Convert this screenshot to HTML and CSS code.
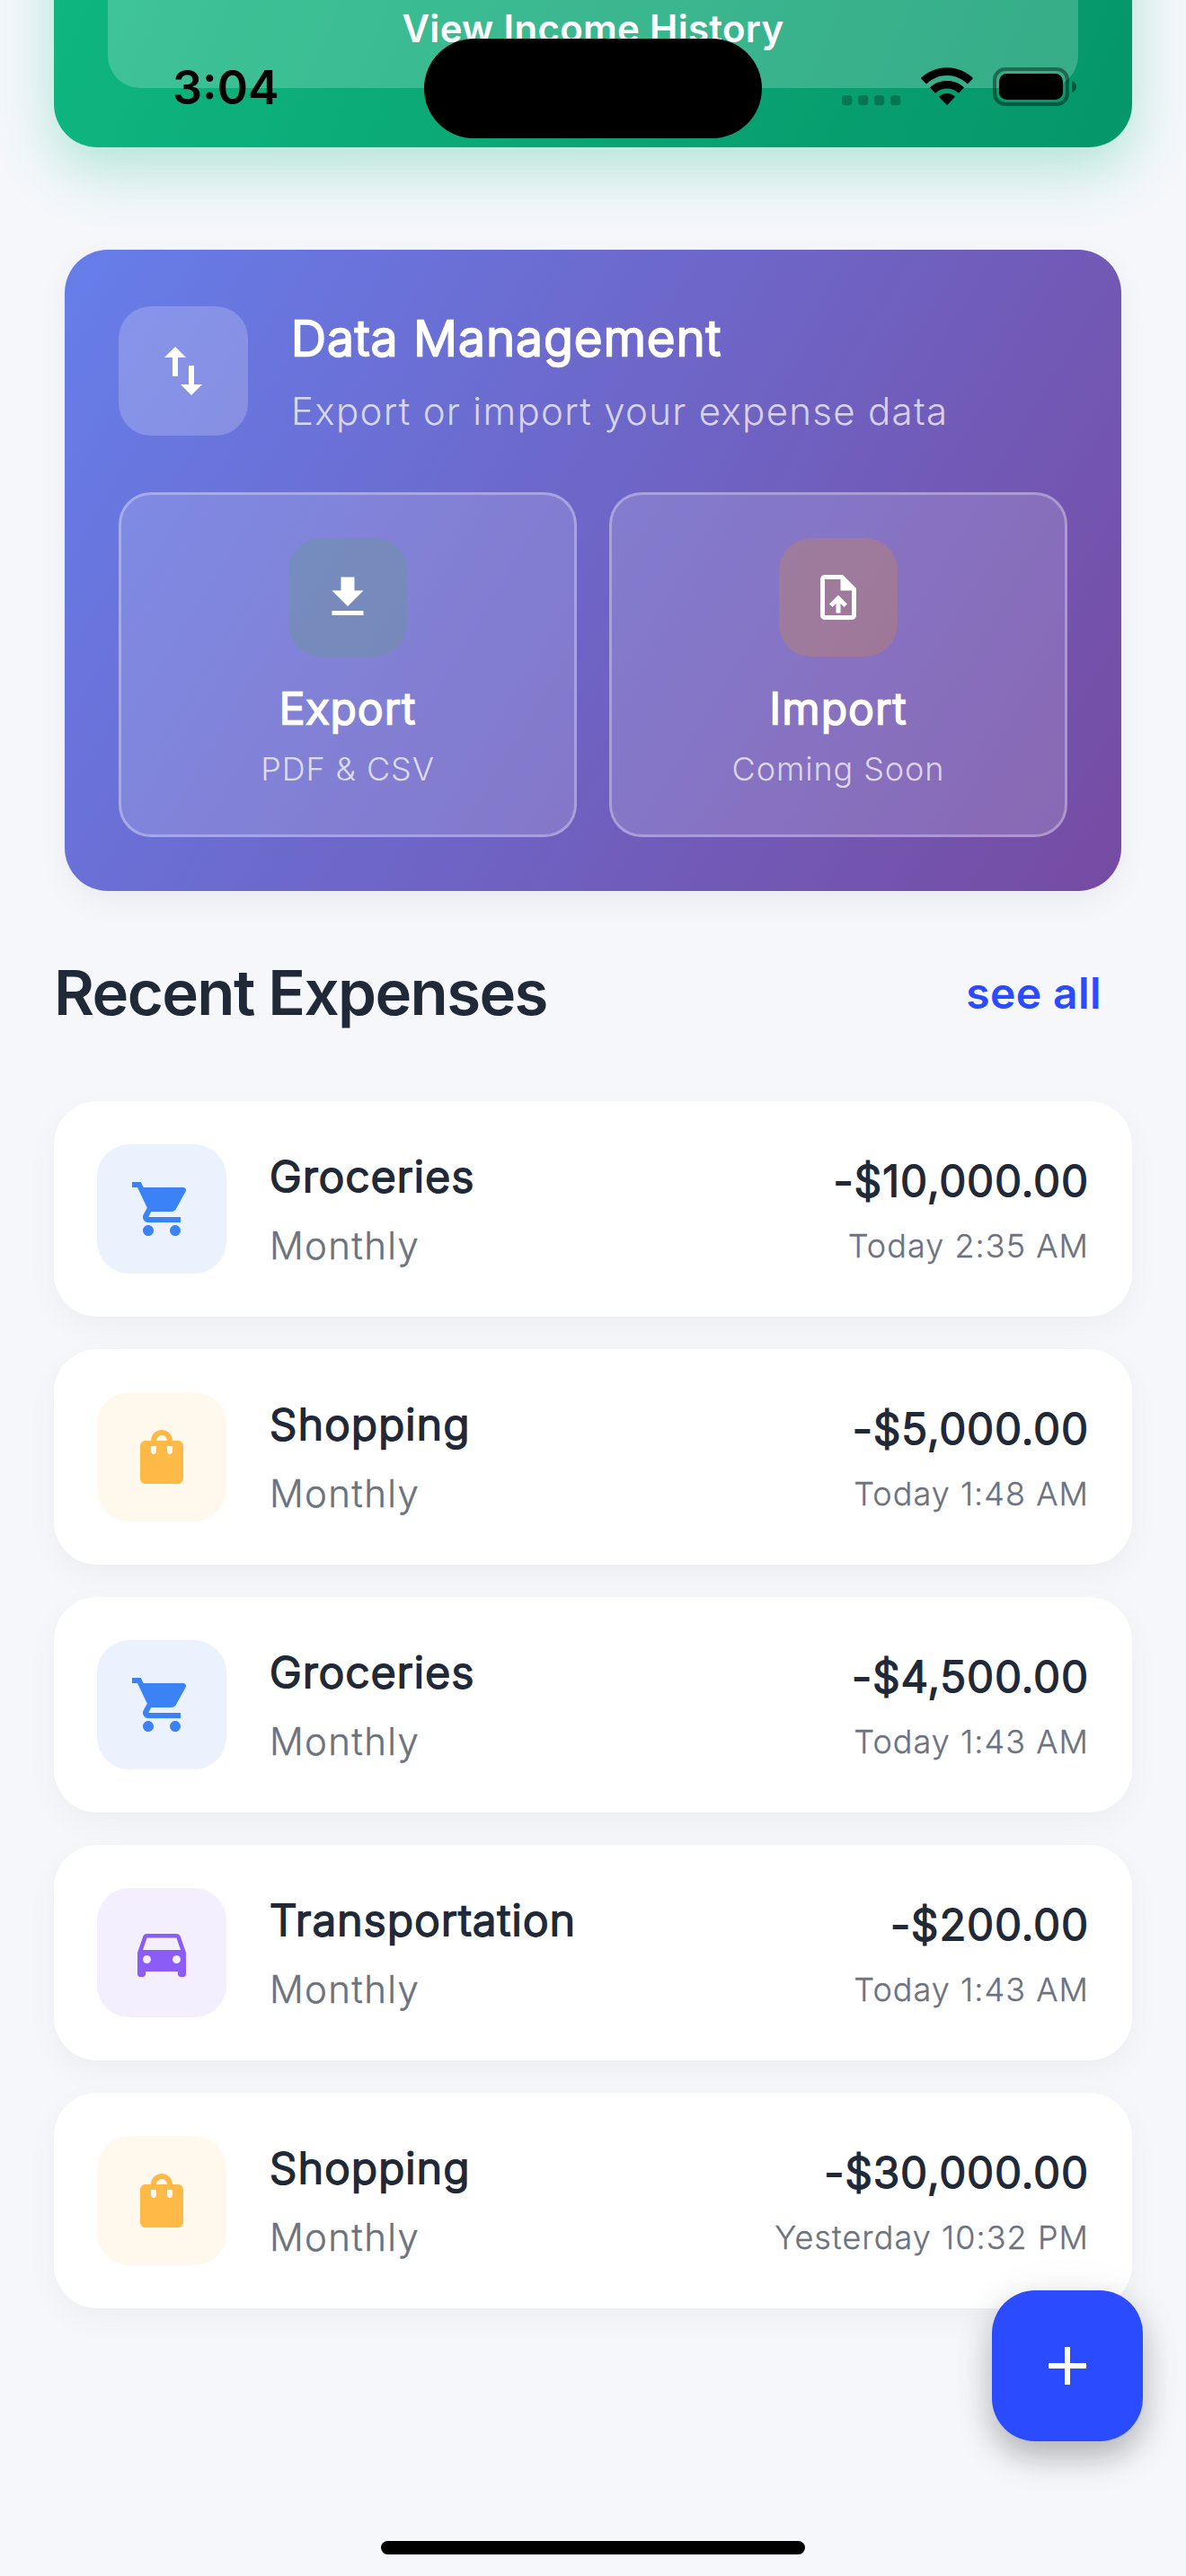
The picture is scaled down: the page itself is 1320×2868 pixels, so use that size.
FILE: index.html
```html
<!DOCTYPE html>
<html lang="en">
<head>
<meta charset="utf-8">
<title>Expenses</title>
<link rel="stylesheet" href="styles.css">
</head>
<body>
<svg class="defs" aria-hidden="true">
  <symbol id="cart" viewBox="0 0 24 24"><path d="M7 18c-1.1 0-1.99.9-1.99 2S5.9 22 7 22s2-.9 2-2-.9-2-2-2zM1 2v2h2l3.6 7.59-1.35 2.45c-.16.28-.25.61-.25.96 0 1.1.9 2 2 2h12v-2H7.42c-.14 0-.25-.11-.25-.25l.03-.12.9-1.63h7.45c.75 0 1.41-.41 1.75-1.03l3.58-6.49c.08-.14.12-.31.12-.48 0-.55-.45-1-1-1H5.21l-.94-2H1zm16 16c-1.1 0-1.99.9-1.99 2s.89 2 1.99 2 2-.9 2-2-.9-2-2-2z"/></symbol>
  <symbol id="bag" viewBox="0 0 24 24"><path d="M18 6h-2c0-2.21-1.79-4-4-4S8 3.79 8 6H6c-1.1 0-2 .9-2 2v12c0 1.1.9 2 2 2h12c1.1 0 2-.9 2-2V8c0-1.1-.9-2-2-2zm-8 4c0 .55-.45 1-1 1s-1-.45-1-1V8h2v2zm2-6c1.1 0 2 .9 2 2h-4c0-1.1.9-2 2-2zm4 6c0 .55-.45 1-1 1s-1-.45-1-1V8h2v2z"/></symbol>
  <symbol id="car" viewBox="0 0 24 24"><path d="M18.92 6.01C18.72 5.42 18.16 5 17.5 5h-11c-.66 0-1.21.42-1.42 1.01L3 12v8c0 .55.45 1 1 1h1c.55 0 1-.45 1-1v-1h12v1c0 .55.45 1 1 1h1c.55 0 1-.45 1-1v-8l-2.08-5.99zM6.5 16c-.83 0-1.5-.67-1.5-1.5S5.67 13 6.5 13s1.5.67 1.5 1.5S7.33 16 6.5 16zm11 0c-.83 0-1.5-.67-1.5-1.5s.67-1.5 1.5-1.5 1.5.67 1.5 1.5-.67 1.5-1.5 1.5zM5 11l1.5-4.5h11L19 11H5z"/></symbol>
</svg>

<div class="screen">
  <main class="content">
    <section class="income">
      <div class="income-button">View Income History</div>
    </section>

    <section class="data">
      <header class="data-head">
        <div class="data-icon">
          <svg class="icon-24" viewBox="0 0 24 24"><path d="M9 3L5 6.99h3V14h2V6.99h3L9 3zm7 14.01V10h-2v7.01h-3L15 21l4-3.99h-3z"/></svg>
        </div>
        <div class="data-text">
          <div class="data-title">Data Management</div>
          <div class="data-sub">Export or import your expense data</div>
        </div>
      </header>
      <div class="tiles">
        <div class="tile">
          <div class="tile-icon export">
            <svg class="icon-20" viewBox="0 0 24 24"><path d="M19 9h-4V3H9v6H5l7 7 7-7zM5 18v2h14v-2H5z"/></svg>
          </div>
          <div class="tile-title">Export</div>
          <div class="tile-sub">PDF &amp; CSV</div>
        </div>
        <div class="tile">
          <div class="tile-icon import">
            <svg class="icon-20" viewBox="0 0 24 24"><path d="M14 2H6c-1.1 0-1.99.9-1.99 2L4 20c0 1.1.89 2 1.99 2H18c1.1 0 2-.9 2-2V8l-6-6zm4 18H6V4h7v5h5v11zM8 15.01l1.41 1.41L11 14.84V19h2v-4.16l1.59 1.59L16 15.01 12.01 11z"/></svg>
          </div>
          <div class="tile-title">Import</div>
          <div class="tile-sub">Coming Soon</div>
        </div>
      </div>
    </section>

    <header class="section-head">
      <h2 class="section-title">Recent Expenses</h2>
      <a class="see-all">see all</a>
    </header>

    <section class="list">
      <article class="expense">
        <div class="badge blue"><svg class="icon-24"><use href="#cart"/></svg></div>
        <div class="info"><div class="name">Groceries</div><div class="period">Monthly</div></div>
        <div class="value"><div class="amount">-$10,000.00</div><div class="time">Today 2:35 AM</div></div>
      </article>
      <article class="expense">
        <div class="badge amber"><svg class="icon-24"><use href="#bag"/></svg></div>
        <div class="info"><div class="name">Shopping</div><div class="period">Monthly</div></div>
        <div class="value"><div class="amount">-$5,000.00</div><div class="time">Today 1:48 AM</div></div>
      </article>
      <article class="expense">
        <div class="badge blue"><svg class="icon-24"><use href="#cart"/></svg></div>
        <div class="info"><div class="name">Groceries</div><div class="period">Monthly</div></div>
        <div class="value"><div class="amount">-$4,500.00</div><div class="time">Today 1:43 AM</div></div>
      </article>
      <article class="expense">
        <div class="badge violet"><svg class="icon-24"><use href="#car"/></svg></div>
        <div class="info"><div class="name">Transportation</div><div class="period">Monthly</div></div>
        <div class="value"><div class="amount">-$200.00</div><div class="time">Today 1:43 AM</div></div>
      </article>
      <article class="expense">
        <div class="badge amber"><svg class="icon-24"><use href="#bag"/></svg></div>
        <div class="info"><div class="name">Shopping</div><div class="period">Monthly</div></div>
        <div class="value"><div class="amount">-$30,000.00</div><div class="time">Yesterday 10:32 PM</div></div>
      </article>
    </section>
  </main>

  <div class="status-bar">
    <div class="clock">3:04</div>
    <div class="island"></div>
    <div class="status-icons">
      <svg class="cell" viewBox="0 0 66 12"><rect width="11.3" height="11.3" rx="3.6"/><rect x="18" width="11.3" height="11.3" rx="3.6"/><rect x="36" width="11.3" height="11.3" rx="3.6"/><rect x="54" width="11.3" height="11.3" rx="3.6"/></svg>
      <svg class="wifi" viewBox="0 0 58 42"><path d="M29 .3C40 .3 50 4.600 57.600 11.600C57.900 11.900 57.900 12.400 57.600 12.700L52.400 18C52.100 18.300 51.600 18.300 51.300 18C45.400 12.500 37.500 9.100 29 9.100S12.600 12.500 6.700 18C6.400 18.300 5.900 18.300 5.600 18L.4 12.700C.1 12.400 .1 11.900 .4 11.600C8 4.600 18 .3 29 .3zM29 15C36 15 42.600 17.600 47.600 22C48 22.300 48 22.800 47.600 23.100L42.500 28.200C42.200 28.500 41.800 28.500 41.400 28.200C38.100 25.300 33.700 23.600 29 23.600S19.900 25.300 16.600 28.200C16.200 28.500 15.800 28.500 15.500 28.200L10.400 23.100C10 22.800 10 22.300 10.400 22C15.400 17.600 22 15 29 15zM29 29C32.200 29 35.200 30.200 37.500 32.200C37.900 32.500 37.900 33 37.600 33.300L29.600 41.600C29.300 41.900 28.700 41.900 28.400 41.600L20.400 33.300C20.100 33 20.100 32.500 20.500 32.200C22.800 30.200 25.800 29 29 29z"/></svg>
      <svg class="battery" viewBox="0 0 94 44"><rect x="2" y="2" width="81" height="39" rx="12" fill="none" stroke="#000" stroke-opacity=".4" stroke-width="4"/><rect x="7" y="7" width="71" height="29" rx="8.500"/><path d="M88 15C91 16 93 18.500 93 21.500S91 27 88 28z" fill-opacity=".45"/></svg>
    </div>
  </div>

  <button class="fab"><svg class="icon-24" viewBox="0 0 24 24"><path d="M19 13h-6v6h-2v-6H5v-2h6V5h2v6h6v2z"/></svg></button>
  <div class="home-indicator"></div>
</div>
</body>
</html>
```
FILE: styles.css
```css
* {
  box-sizing: border-box;
}

body {
  margin: 0;
  background: #f5f7fb;
  font-family: Inter, "Liberation Sans", sans-serif;
  font-weight: 300;
  letter-spacing: 1.3px;
  color: #1f2937;
}

.defs {
  display: none;
}

.screen {
  position: relative;
  width: 1320px;
  height: 2868px;
  overflow: hidden;
  background: #f5f7fb;
}

/* Scrolled page content */
.content {
  display: flex;
  flex-direction: column;
  margin-top: -335.6px;
  padding: 0 60px;
}

.icon-24 {
  display: block;
  width: 72px;
  height: 72px;
  fill: currentColor;
}

.icon-20 {
  display: block;
  width: 60px;
  height: 60px;
  fill: currentColor;
}

/* Income card */
.income {
  display: flex;
  flex-direction: column;
  justify-content: flex-end;
  height: 500px;
  padding: 66px 60px;
  border-radius: 48px;
  background: linear-gradient(112.6deg, #10b981, #059669);
  box-shadow: 0 24px 64px rgba(16, 185, 129, 0.3);
}

.income-button {
  height: 132px;
  border-radius: 36px;
  background: rgba(255, 255, 255, 0.2);
  color: #fff;
  font-size: 42px;
  font-weight: 600;
  line-height: 132px;
  letter-spacing: 0.28px;
  text-align: center;
}

/* Data management card */
.data {
  height: 714px;
  margin: 114px 12px 0;
  padding: 60px;
  border-radius: 48px;
  background: linear-gradient(121.3deg, #667eea, #764ba2);
  box-shadow: 0 12px 35px rgba(0, 0, 0, 0.05);
  color: #fff;
}

.data-head {
  display: flex;
  align-items: center;
  gap: 48px;
  height: 150px;
}

.data-icon {
  display: grid;
  place-items: center;
  width: 144px;
  height: 144px;
  border-radius: 36px;
  background: rgba(255, 255, 255, 0.2);
}

.data-title {
  margin-bottom: 12px;
  font-size: 54px;
  line-height: 77px;
  -webkit-text-stroke: 2.6px currentColor;
}

.data-sub {
  font-size: 42px;
  line-height: 61px;
  color: rgba(255, 255, 255, 0.74);
}

.tiles {
  display: grid;
  grid-template-columns: 1fr 1fr;
  gap: 36px;
  margin-top: 60px;
}

.tile {
  display: flex;
  flex-direction: column;
  align-items: center;
  height: 384px;
  padding: 48px;
  border: 3px solid rgba(255, 255, 255, 0.3);
  border-radius: 36px;
  background: rgba(255, 255, 255, 0.15);
}

.tile-icon {
  display: grid;
  place-items: center;
  width: 132px;
  height: 132px;
  border-radius: 36px;
}

.tile-icon.export {
  background: rgba(76, 175, 80, 0.2);
}

.tile-icon.import {
  background: rgba(255, 152, 0, 0.2);
}

.tile-title {
  margin: 22px 0 6px;
  font-size: 48px;
  line-height: 72px;
  letter-spacing: 1.5px;
  -webkit-text-stroke: 2.4px currentColor;
}

.tile-sub {
  font-size: 36px;
  line-height: 50px;
  letter-spacing: 0.9px;
  color: rgba(255, 255, 255, 0.74);
}

/* Section heading */
.section-head {
  display: flex;
  align-items: center;
  justify-content: space-between;
  margin: 59px 0 67px;
  padding-right: 34px;
}

.section-title {
  margin: 0;
  font-size: 69px;
  font-weight: 600;
  line-height: 108px;
  letter-spacing: -1.65px;
}

.see-all {
  font-size: 48px;
  font-weight: 600;
  letter-spacing: 0.4px;
  color: #2b4bff;
}

/* Expense list */
.list {
  display: flex;
  flex-direction: column;
  gap: 36px;
}

.expense {
  display: flex;
  align-items: center;
  gap: 48px;
  height: 240px;
  padding: 48px;
  border-radius: 48px;
  background: #fff;
  box-shadow: 0 12px 35px rgba(0, 0, 0, 0.04);
}

.badge {
  display: grid;
  place-items: center;
  width: 144px;
  height: 144px;
  border-radius: 36px;
}

.badge.blue {
  background: #ebf2fe;
  color: #3b82f6;
}

.badge.amber {
  background: #fff8ed;
  color: #ffb946;
}

.badge.violet {
  background: #f3effe;
  color: #8b5cf6;
}

.info {
  flex: 1;
}

.name {
  margin-bottom: 9px;
  font-size: 48px;
  line-height: 72px;
  -webkit-text-stroke: 2.2px currentColor;
}

.period {
  font-size: 42px;
  line-height: 63px;
  color: #6b7280;
  -webkit-text-stroke: 0.4px currentColor;
}

.value {
  text-align: right;
}

.amount {
  margin-bottom: 9px;
  font-size: 48px;
  line-height: 72px;
  letter-spacing: 1.2px;
  -webkit-text-stroke: 2.2px currentColor;
}

.time {
  font-size: 36px;
  line-height: 54px;
  letter-spacing: 1.05px;
  color: #6b7280;
  -webkit-text-stroke: 0.3px currentColor;
}

/* System overlays */
.status-bar {
  position: absolute;
  inset: 0 0 auto;
  display: grid;
  grid-template-columns: 1fr 376px 1fr;
  height: 194px;
  color: #000;
}

.clock {
  padding-left: 192px;
  font-size: 52px;
  font-weight: 600;
  line-height: 196px;
  letter-spacing: 0;
}

.island {
  align-self: center;
  height: 111px;
  border-radius: 56px;
  background: #000;
}

.status-icons {
  display: flex;
  align-items: flex-start;
  padding: 75px 0 0 89px;
}

.cell {
  width: 66px;
  height: 12px;
  margin: 31px 22px 0 0;
  fill-opacity: 0.25;
}

.wifi {
  width: 58px;
  height: 42px;
  margin-right: 22px;
}

.battery {
  width: 94px;
  height: 44px;
}

.fab {
  position: absolute;
  right: 48px;
  top: 2550px;
  display: grid;
  place-items: center;
  width: 168px;
  height: 168px;
  padding: 0;
  border: 0;
  border-radius: 48px;
  background: #2b4bff;
  color: #fff;
  box-shadow: 0 18px 36px rgba(0, 0, 0, 0.25), 0 3px 54px rgba(0, 0, 0, 0.05);
}

.home-indicator {
  position: absolute;
  left: 424px;
  top: 2829px;
  width: 472px;
  height: 15px;
  border-radius: 8px;
  background: #000;
}
```
